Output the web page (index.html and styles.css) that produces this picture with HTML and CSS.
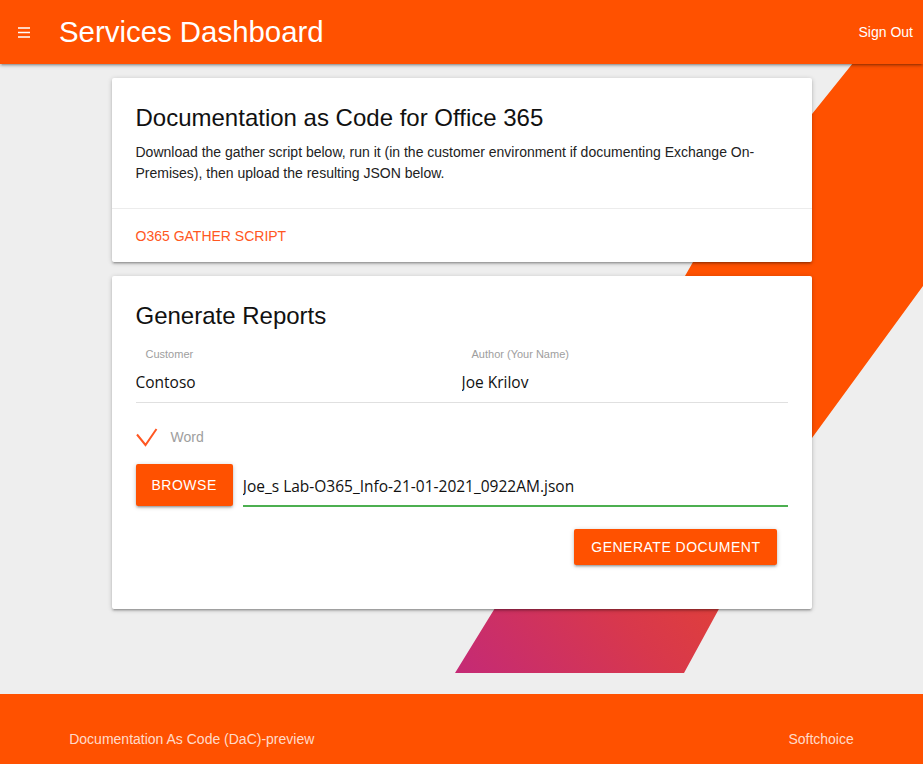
FILE: index.html
```html
<!DOCTYPE html>
<html lang="en">
<head>
    <meta charset="UTF-8">
    <meta name="viewport" content="width=device-width, initial-scale=1.0">
    <title>Services Dashboard</title>
    <link rel="stylesheet" href="styles.css">
</head>
<body>

<svg class="backdrop" width="923" height="764" viewBox="0 0 923 764">
    <defs>
        <linearGradient id="band" gradientUnits="userSpaceOnUse" x1="900" y1="300" x2="455" y2="673">
            <stop offset="0" stop-color="#ff5100"/>
            <stop offset="0.3" stop-color="#ff5100"/>
            <stop offset="0.58" stop-color="#df3f3c"/>
            <stop offset="0.72" stop-color="#d8384c"/>
            <stop offset="1" stop-color="#c42a76"/>
        </linearGradient>
    </defs>
    <polygon fill="url(#band)" points="853,63 1200,63 923,286 812,438 684,673 455,673 495,608 693,262"/>
</svg>

<header class="topbar">
    <span class="menu-icon">
        <svg width="12" height="11" viewBox="0 0 12 11">
            <path d="M0 1h12M0 5.5h12M0 10h12" stroke="#fff" stroke-width="1.6"/>
        </svg>
    </span>
    <span class="brand">Services Dashboard</span>
    <a class="signout" href="#">Sign Out</a>
</header>

<main class="content">
    <section class="card">
        <div class="card-body">
            <h2 class="card-title">Documentation as Code for Office 365</h2>
            <p>Download the gather script below, run it (in the customer environment if documenting Exchange On-Premises), then upload the resulting JSON below.</p>
        </div>
        <div class="card-action">
            <a href="#">O365 GATHER SCRIPT</a>
        </div>
    </section>

    <section class="card">
        <div class="card-body">
            <h2 class="card-title">Generate Reports</h2>

            <div class="fields">
                <div class="field">
                    <label for="customer">Customer</label>
                    <input type="text" id="customer" value="Contoso">
                </div>
                <div class="field">
                    <label for="author">Author (Your Name)</label>
                    <input type="text" id="author" value="Joe Krilov">
                </div>
            </div>

            <div class="check">
                <svg width="22" height="19" viewBox="0 0 22 19">
                    <path d="M1 6.5l8.5 10.5L20.5 1" fill="none" stroke="#ff5722" stroke-width="2"/>
                </svg>
                <span>Word</span>
            </div>

            <div class="file-row">
                <button class="btn">Browse</button>
                <input type="text" class="file-path" value="Joe_s Lab-O365_Info-21-01-2021_0922AM.json">
            </div>

            <div class="actions">
                <button class="btn">Generate Document</button>
            </div>
        </div>
    </section>
</main>

<footer class="page-footer">
    <div class="footer-inner">
        <span>Documentation As Code (DaC)-preview</span>
        <span>Softchoice</span>
    </div>
</footer>

</body>
</html>
```

FILE: styles.css
```css
body {
    font-family: "Liberation Sans", Arial, sans-serif;
    background-color: #eeeeee;
    color: rgba(0, 0, 0, 0.87);
    margin: 0;
    min-height: 100vh;
    display: flex;
    flex-direction: column;
    position: relative;
    overflow: hidden;
}
.backdrop {
    position: absolute;
    top: 0;
    left: 0;
    z-index: 0;
}
.topbar {
    position: relative;
    z-index: 2;
    height: 64px;
    background-color: #ff5100;
    color: white;
    display: flex;
    align-items: center;
    box-shadow: 0 2px 2px 0 rgba(0, 0, 0, 0.14), 0 3px 1px -2px rgba(0, 0, 0, 0.12), 0 1px 5px 0 rgba(0, 0, 0, 0.2);
}
.menu-icon {
    display: flex;
    margin-left: 18px;
    margin-top: 1px;
}
.brand {
    font-size: 29.4px;
    margin-left: 29px;
}
.signout {
    margin-left: auto;
    padding-right: 10px;
    color: white;
    text-decoration: none;
    font-size: 14px;
}
.content {
    position: relative;
    z-index: 1;
    padding-top: 14px;
    flex: 1;
}
.card {
    width: 700px;
    margin: 0 auto 14px;
    background-color: white;
    border-radius: 2px;
    box-shadow: 0 2px 2px 0 rgba(0, 0, 0, 0.14), 0 3px 1px -2px rgba(0, 0, 0, 0.12), 0 1px 5px 0 rgba(0, 0, 0, 0.2);
}
.card-body {
    padding: 24px;
}
.card-title {
    font-size: 24px;
    font-weight: normal;
    line-height: 32px;
    margin: 0;
    color: #111;
}
.card-body p {
    font-size: 14px;
    line-height: 21px;
    margin: 8px 0 0;
    color: #222;
}
.card-action {
    border-top: 1px solid rgba(160, 160, 160, 0.2);
    padding: 16px 24px;
    height: 21px;
    line-height: 21px;
}
.card-action a {
    color: #ff5722;
    text-decoration: none;
    font-size: 14px;
}
.fields {
    display: grid;
    grid-template-columns: 1fr 1fr;
    margin-top: 16px;
}
.field label {
    display: block;
    font-size: 11px;
    line-height: 12px;
    color: #9e9e9e;
    margin-left: 10px;
}
.field input, .file-path {
    display: block;
    width: 100%;
    box-sizing: border-box;
    height: 41px;
    margin-top: 2px;
    padding: 0;
    border: none;
    border-bottom: 1px solid #e0e0e0;
    font-family: "Open Sans", sans-serif;
    font-size: 15.5px;
    color: #111;
    outline: none;
    background: transparent;
}
.check {
    display: flex;
    align-items: center;
    margin-top: 20px;
    height: 28px;
}
.check svg {
    margin-top: 1px;
}
.check span {
    margin-left: 13px;
    font-size: 14px;
    color: #9e9e9e;
}
.file-row {
    display: flex;
    margin-top: 13px;
}
.btn {
    background-color: #ff5100;
    color: white;
    border: none;
    border-radius: 2px;
    height: 36px;
    padding: 0 16px;
    font-family: "Liberation Sans", Arial, sans-serif;
    font-size: 14px;
    letter-spacing: 0.5px;
    text-transform: uppercase;
    cursor: pointer;
    box-shadow: 0 2px 2px 0 rgba(0, 0, 0, 0.14), 0 3px 1px -2px rgba(0, 0, 0, 0.12), 0 1px 5px 0 rgba(0, 0, 0, 0.2);
}
.file-row .btn {
    height: 42px;
    flex-shrink: 0;
}
.file-path {
    flex: 1;
    margin: 0 0 0 10px;
    height: 43px;
    padding-top: 2px;
    border-bottom: 2px solid #4caf50;
}
.actions {
    display: flex;
    justify-content: flex-end;
    margin: 22px 11px 20px 0;
}
.actions .btn {
    padding: 0 16px 0 17px;
}
.page-footer {
    position: relative;
    z-index: 1;
    background-color: #ff5100;
    padding-top: 20px;
}
.footer-inner {
    width: 85%;
    margin: 0 auto;
    height: 50px;
    line-height: 50px;
    display: flex;
    justify-content: space-between;
    font-size: 14px;
    color: rgba(255, 255, 255, 0.8);
}
```
